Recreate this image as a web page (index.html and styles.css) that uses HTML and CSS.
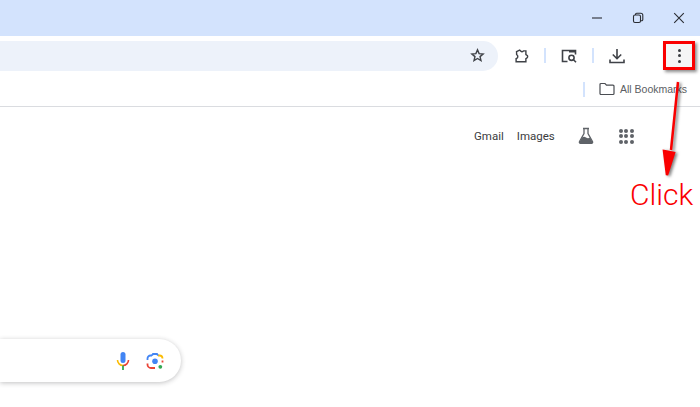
FILE: index.html
```html
<!DOCTYPE html>
<html lang="en">
<head>
<meta charset="utf-8">
<title>Chrome menu</title>
<link rel="stylesheet" href="styles.css">
</head>
<body>
<div class="page">
  <header class="titlebar">
    <svg class="win-icon" viewBox="0 0 12 12"><path d="M1 6h10" /></svg>
    <svg class="win-icon" viewBox="0 0 12 12"><rect x="1.500" y="3" width="7" height="7.500" rx="1.500"/><path d="M3.500 3V2.500A1.200 1.200 0 0 1 4.700 1.300h4.100a2 2 0 0 1 2 2v4.200a1.200 1.200 0 0 1-1.200 1.200H8.500"/></svg>
    <svg class="win-icon" viewBox="0 0 12 12"><path d="M1.200 1.200l9.600 9.600M10.800 1.200l-9.600 9.600"/></svg>
  </header>
  <div class="toolbar">
    <div class="omnibox">
      <svg class="tool-icon star" viewBox="0 0 16 16"><path d="M8 2l1.700 4 4.300.4-3.300 2.800 1 4.200L8 11.200l-3.700 2.200 1-4.200L2 6.400 6.300 6z"/></svg>
    </div>
    <svg class="tool-icon ext" viewBox="0 0 18 18"><path d="M4 4l3.500-1.700 1 1a1.800 1.800 0 0 0 3 .2l.5-.3h2.500v4.300l1 .6a1.800 1.800 0 0 1 0 3.200l-1 .6v3.600H3.500v-3.500a2.400 2.400 0 0 0 .6-4.500z"/></svg>
    <span class="divider"></span>
    <svg class="tool-icon panel" viewBox="0 0 18 18"><path d="M7.500 14.500H2.500v-11h13v4"/><rect class="solid" x="9" y="3" width="7" height="2.500"/><circle cx="11.500" cy="10.800" r="2.600"/><path d="M13.500 12.800l2.500 2.500"/></svg>
    <span class="divider"></span>
    <svg class="tool-icon download" viewBox="0 0 18 18"><path d="M9 2v9.500M4.800 7.500L9 11.700l4.200-4.200M2 12.500v3h14v-3"/></svg>
    <div class="menu-btn">
      <span class="dot"></span><span class="dot"></span><span class="dot"></span>
    </div>
  </div>
  <div class="bookmarks">
    <span class="divider"></span>
    <svg class="folder" viewBox="0 0 16 14"><path d="M1 2.500A1 1 0 0 1 2 1.500h4l1.500 1.700H14a1 1 0 0 1 1 1v7.300a1 1 0 0 1-1 1H2a1 1 0 0 1-1-1z"/></svg>
    <span class="bm-label">All Bookmarks</span>
  </div>
  <main class="content">
    <nav class="google-bar">
      <a class="g-link">Gmail</a>
      <a class="g-link">Images</a>
      <svg class="flask" viewBox="0 0 18 18"><path class="outline" d="M6 1.500h6M7 1.500v5L2.500 14.500a1.200 1.200 0 0 0 1 1.800h11a1.200 1.200 0 0 0 1-1.800L11 6.500v-5"/><path class="fill" d="M5 10.500q2-1.500 4 0t4 0l2.500 4.500a1 1 0 0 1-1 1.500h-11a1 1 0 0 1-1-1.500z"/></svg>
      <div class="apps">
        <i></i><i></i><i></i><i></i><i></i><i></i><i></i><i></i><i></i>
      </div>
    </nav>
    <div class="search">
      <svg class="mic" viewBox="0 0 14 20"><rect x="4.500" y="1" width="5" height="11" rx="2.500" fill="#4285f4"/><path d="M1.500 9a5.500 5.500 0 0 0 5.500 5.500" fill="none" stroke="#fbbc04" stroke-width="1.600"/><path d="M12.500 9A5.500 5.500 0 0 1 7 14.500" fill="none" stroke="#ea4335" stroke-width="1.600"/><path d="M7 14.500V19" stroke="#34a853" stroke-width="1.800"/></svg>
      <svg class="lens" viewBox="0 0 18 18"><path d="M1.500 8V6.500a3 3 0 0 1 3-3H6" fill="none" stroke="#4285f4" stroke-width="1.800"/><path d="M12 3.500h1.500a3 3 0 0 1 3 3" fill="none" stroke="#fbbc04" stroke-width="1.800"/><path d="M6 3.500l1-1.500h4l1 1.500" fill="none" stroke="#4285f4" stroke-width="1.800"/><path d="M1.500 11.500v1a3.500 3.500 0 0 0 3.500 3.500h4" fill="none" stroke="#ea4335" stroke-width="1.800"/><path d="M16.500 8.500v2" fill="none" stroke="#ea4335" stroke-width="1.800"/><circle cx="9" cy="9.300" r="2.800" fill="#4285f4"/><circle cx="14.300" cy="14.800" r="1.900" fill="#34a853"/></svg>
    </div>
  </main>
  <svg class="arrow" viewBox="0 0 700 407"><path d="M678 82L671 150M664 151l10 2-7 22z"/></svg>
  <span class="click">Click</span>
</div>
</body>
</html>
```
FILE: styles.css
```css
* { box-sizing: border-box; }
html, body { margin: 0; padding: 0; background: #fff; }
.page {
  position: relative;
  width: 700px;
  height: 407px;
  overflow: hidden;
  font-family: "Liberation Sans", Arial, sans-serif;
  display: flex;
  flex-direction: column;
}
.titlebar {
  height: 36px;
  background: #d3e3fd;
  display: flex;
  justify-content: flex-end;
  align-items: center;
  gap: 29px;
  padding: 0 15px 1px 0;
  flex: none;
}
.win-icon {
  width: 12px;
  height: 12px;
  fill: none;
  stroke: #2a2d33;
  stroke-width: 1.100;
}
.toolbar {
  height: 38px;
  display: flex;
  align-items: center;
  flex: none;
  padding-top: 1px;
}
.omnibox {
  width: 498px;
  height: 30px;
  background: #edf2fa;
  border-radius: 0 15px 15px 0;
  display: flex;
  justify-content: flex-end;
  align-items: center;
  padding-right: 13px;
  flex: none;
}
.tool-icon {
  width: 16px;
  height: 16px;
  fill: none;
  stroke: #3f4247;
  stroke-width: 1.600;
  flex: none;
}
.star { width: 15px; height: 15px; stroke-width: 1.500; }
.ext { margin-left: 15px; }
.toolbar .divider { margin: 0 15px; }
.panel { margin: 0 -1px; width: 18px; height: 18px; }
.panel .solid { fill: #3f4247; stroke: none; }
.download { width: 18px; height: 18px; margin-left: -1px; }
.divider {
  display: block;
  width: 2px;
  height: 15px;
  background: #d3e3fd;
  flex: none;
}
.menu-btn {
  margin-left: 37px;
  width: 32px;
  height: 29px;
  background: #f5f5f5;
  border: 3px solid #fa0000;
  box-shadow: 2px 2px 3px rgba(0, 0, 0, .45);
  display: flex;
  flex-direction: column;
  align-items: center;
  justify-content: center;
  gap: 2.500px;
  flex: none;
}
.dot {
  width: 3px;
  height: 3px;
  border-radius: 50%;
  background: #3a3c40;
}
.bookmarks {
  height: 33px;
  flex: none;
  display: flex;
  align-items: center;
  padding-left: 583px;
  border-bottom: 1px solid #dadce0;
  padding-bottom: 2px;
}
.folder {
  width: 16px;
  height: 14px;
  margin-left: 14px;
  fill: none;
  stroke: #4a4d52;
  stroke-width: 1.200;
}
.bm-label {
  margin-left: 5px;
  font-size: 10.500px;
  color: #5b5e63;
  white-space: nowrap;
}
.content {
  flex: 1;
  position: relative;
  display: flex;
  flex-direction: column;
}
.google-bar {
  display: flex;
  align-items: center;
  padding: 19px 0 0 474px;
  height: 39px;
}
.g-link {
  font-size: 11.500px;
  color: #3a3c40;
  font-family: "Roboto", "Liberation Sans", sans-serif;
  margin-right: 13px;
}
.flask {
  width: 18px;
  height: 18px;
  margin-left: 9px;
}
.flask .outline { fill: none; stroke: #5f6368; stroke-width: 1.300; }
.flask .fill { fill: #5f6368; }
.apps {
  display: grid;
  grid-template-columns: repeat(3, 4px);
  gap: 1.500px;
  margin-left: 24px;
}
.apps i {
  display: block;
  width: 4px;
  height: 4px;
  border-radius: 50%;
  background: #5f6368;
}
.search {
  margin-top: 193px;
  width: 181px;
  height: 43px;
  border-radius: 0 22px 22px 0;
  background: #fff;
  box-shadow: 0 1px 5px rgba(32, 33, 36, .28);
  display: flex;
  justify-content: flex-end;
  align-items: center;
  padding-right: 17px;
  gap: 16px;
}
.mic { width: 14px; height: 20px; }
.lens { width: 18px; height: 18px; }
.arrow {
  position: absolute;
  inset: 0;
  width: 700px;
  height: 407px;
  pointer-events: none;
  filter: drop-shadow(2px 1px 1.500px rgba(0, 0, 0, .5));
}
.arrow path {
  fill: #fa0000;
  stroke: #fa0000;
  stroke-width: 2.500;
}
.click {
  position: absolute;
  left: 630px;
  top: 178px;
  font-family: "Roboto", "Liberation Sans", sans-serif;
  font-weight: 300;
  font-size: 30px;
  line-height: 34px;
  color: #fa0000;
}
```
